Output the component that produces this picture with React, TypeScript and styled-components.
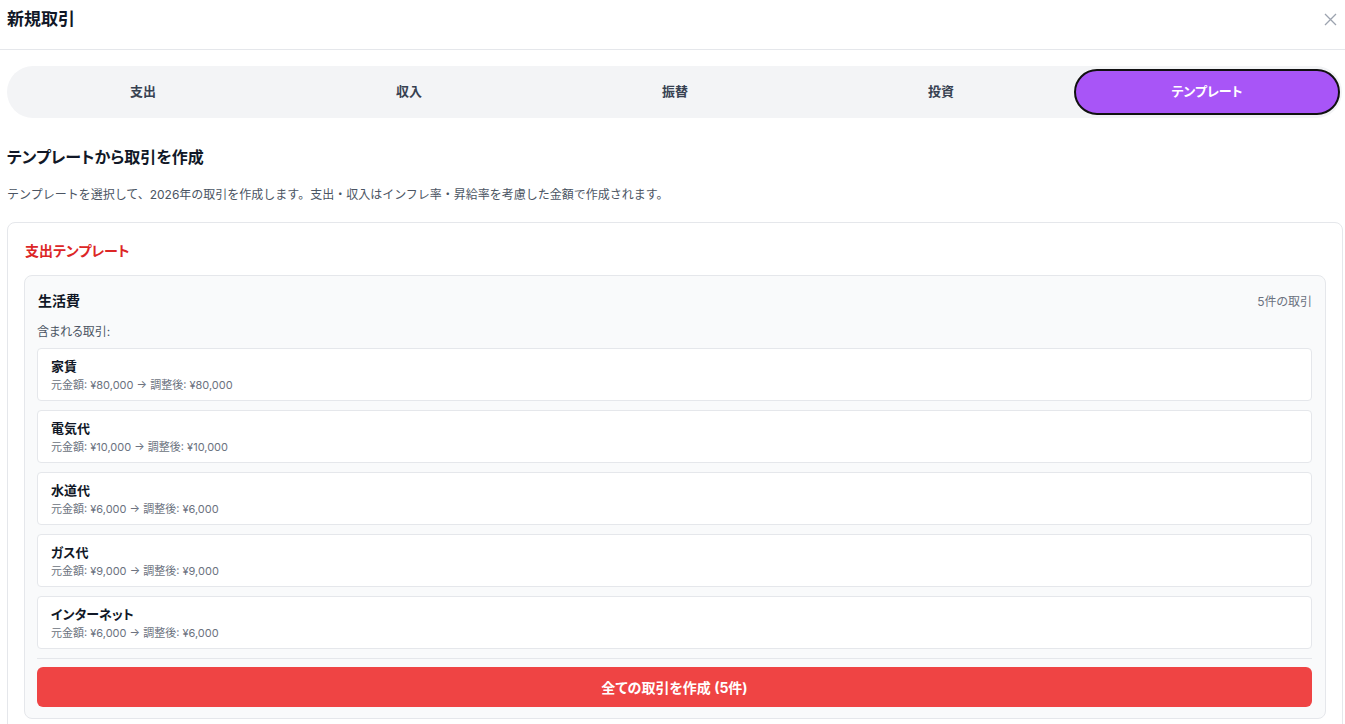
import React from 'react';
import { useState } from 'react';
import styled, { createGlobalStyle } from 'styled-components';

type TemplateItem = {
  name: string;
  original: number;
  adjusted: number;
};

const GlobalStyle = createGlobalStyle`
  html, body {
    margin: 0;
    padding: 0;
    background: #ffffff;
    overflow: hidden;
  }
  body {
    font-family: "Inter", "Noto Sans CJK JP", sans-serif;
    font-feature-settings: "palt";
    color: #111827;
  }
  * { box-sizing: border-box; }
`

const Modal = styled.div`
  width: 1345px;
  height: 724px;
  display: flex;
  flex-direction: column;
  overflow: hidden;
`

const Header = styled.div`
  display: flex;
  justify-content: space-between;
  align-items: flex-start;
  padding: 7px 8px 18px 7px;
  border-bottom: 1px solid #e5e7eb;
`

const Title = styled.h1`
  margin: 0;
  font-size: 17px;
  line-height: 24px;
  font-weight: 700;
  color: #111827;
`

const CloseButton = styled.button`
  border: none;
  background: none;
  padding: 0;
  width: 14px;
  height: 14px;
  margin-top: 5px;
  display: flex;
  align-items: center;
  justify-content: center;
  color: #9ca3af;
  cursor: pointer;
`

const Body = styled.div`
  padding: 16px 2px 0 7px;
  display: flex;
  flex-direction: column;
`

const TabList = styled.div`
  display: grid;
  grid-template-columns: repeat(5, 1fr);
  background: #f3f4f6;
  border-radius: 999px;
  padding: 3px 2px 3px 3px;
  height: 52px;
  margin-right: 1px;
`

const Tab = styled.button<{ $active?: boolean }>`
  border: 2px solid ${p => (p.$active ? '#111111' : 'transparent')};
  border-radius: 999px;
  background: ${p => (p.$active ? '#a855f7' : 'transparent')};
  color: ${p => (p.$active ? '#ffffff' : '#374151')};
  font-family: inherit;
  font-feature-settings: "palt";
  font-size: 13px;
  font-weight: 700;
  padding: 0 0 3px 0;
  cursor: pointer;
`

const SectionTitle = styled.h2`
  margin: 27px 0 0 0;
  font-size: 16px;
  line-height: 24px;
  font-weight: 700;
  color: #111827;
`

const Description = styled.p`
  margin: 17px 0 0 0;
  font-size: 12px;
  line-height: 18px;
  color: #4b5563;
  font-feature-settings: normal;
`

const OuterCard = styled.div`
  margin-top: 18px;
  border: 1px solid #e5e7eb;
  border-radius: 8px;
  padding: 18px 16px 16px 16px;
`

const GroupLabel = styled.h3`
  margin: 0 0 14px 1px;
  font-size: 14px;
  line-height: 20px;
  font-weight: 700;
  color: #dc2626;
`

const TemplateCard = styled.div`
  background: #f9fafb;
  border: 1px solid #e5e7eb;
  border-radius: 8px;
  padding: 12px 13px 11px 12px;
`

const TemplateHead = styled.div`
  display: flex;
  justify-content: space-between;
  align-items: center;
  height: 24px;
`

const TemplateName = styled.span`
  font-size: 14px;
  font-weight: 700;
  color: #111827;
  margin-left: 1px;
`

const TemplateCount = styled.span`
  font-size: 12px;
  color: #6b7280;
`

const IncludedLabel = styled.div`
  margin-top: 10px;
  font-size: 12px;
  line-height: 20px;
  color: #4b5563;
`

const ItemList = styled.div`
  margin-top: 6px;
  display: flex;
  flex-direction: column;
  gap: 9px;
`

const Item = styled.div`
  background: #ffffff;
  border: 1px solid #e5e7eb;
  border-radius: 4px;
  padding: 8px 13px 6px 13px;
`

const ItemName = styled.div`
  font-size: 13px;
  line-height: 18px;
  font-weight: 700;
  color: #111827;
`

const ItemSub = styled.div`
  margin-top: 2px;
  font-size: 11px;
  line-height: 17px;
  color: #6b7280;
`

const Footer = styled.div`
  margin-top: 9px;
  border-top: 1px solid #e5e7eb;
  padding-top: 8px;
`

const CreateButton = styled.button`
  width: 100%;
  height: 40px;
  border: none;
  border-radius: 6px;
  background: #ef4444;
  color: #ffffff;
  font-family: inherit;
  font-feature-settings: "palt";
  font-size: 14px;
  font-weight: 700;
  cursor: pointer;
`

const tabs = ['支出', '収入', '振替', '投資', 'テンプレート'];

const items: TemplateItem[] = [
  { name: '家賃', original: 80000, adjusted: 80000 },
  { name: '電気代', original: 10000, adjusted: 10000 },
  { name: '水道代', original: 6000, adjusted: 6000 },
  { name: 'ガス代', original: 9000, adjusted: 9000 },
  { name: 'インターネット', original: 6000, adjusted: 6000 },
];

const yen = (n: number) => '¥' + n.toLocaleString('en-US');

const App = () => {
  const [activeTab, setActiveTab] = useState('テンプレート');

  return (
    <Modal>
      <GlobalStyle />
      <Header>
        <Title>新規取引</Title>
        <CloseButton aria-label="閉じる">
          <svg width="13" height="13" viewBox="0 0 13 13" fill="none" stroke="currentColor" strokeWidth="1.3">
            <path d="M1 1L12 12M12 1L1 12" />
          </svg>
        </CloseButton>
      </Header>
      <Body>
        <TabList>
          {tabs.map(t => (
            <Tab key={t} $active={t === activeTab} onClick={() => setActiveTab(t)}>
              {t}
            </Tab>
          ))}
        </TabList>

        <SectionTitle>テンプレートから取引を作成</SectionTitle>
        <Description>
          テンプレートを選択して、2026年の取引を作成します。支出・収入はインフレ率・昇給率を考慮した金額で作成されます。
        </Description>

        <OuterCard>
          <GroupLabel>支出テンプレート</GroupLabel>
          <TemplateCard>
            <TemplateHead>
              <TemplateName>生活費</TemplateName>
              <TemplateCount>{items.length}件の取引</TemplateCount>
            </TemplateHead>
            <IncludedLabel>含まれる取引:</IncludedLabel>
            <ItemList>
              {items.map(item => (
                <Item key={item.name}>
                  <ItemName>{item.name}</ItemName>
                  <ItemSub>
                    元金額: {yen(item.original)} → 調整後: {yen(item.adjusted)}
                  </ItemSub>
                </Item>
              ))}
            </ItemList>
            <Footer>
              <CreateButton>全ての取引を作成 ({items.length}件)</CreateButton>
            </Footer>
          </TemplateCard>
        </OuterCard>
      </Body>
    </Modal>
  );
};

export default App;
